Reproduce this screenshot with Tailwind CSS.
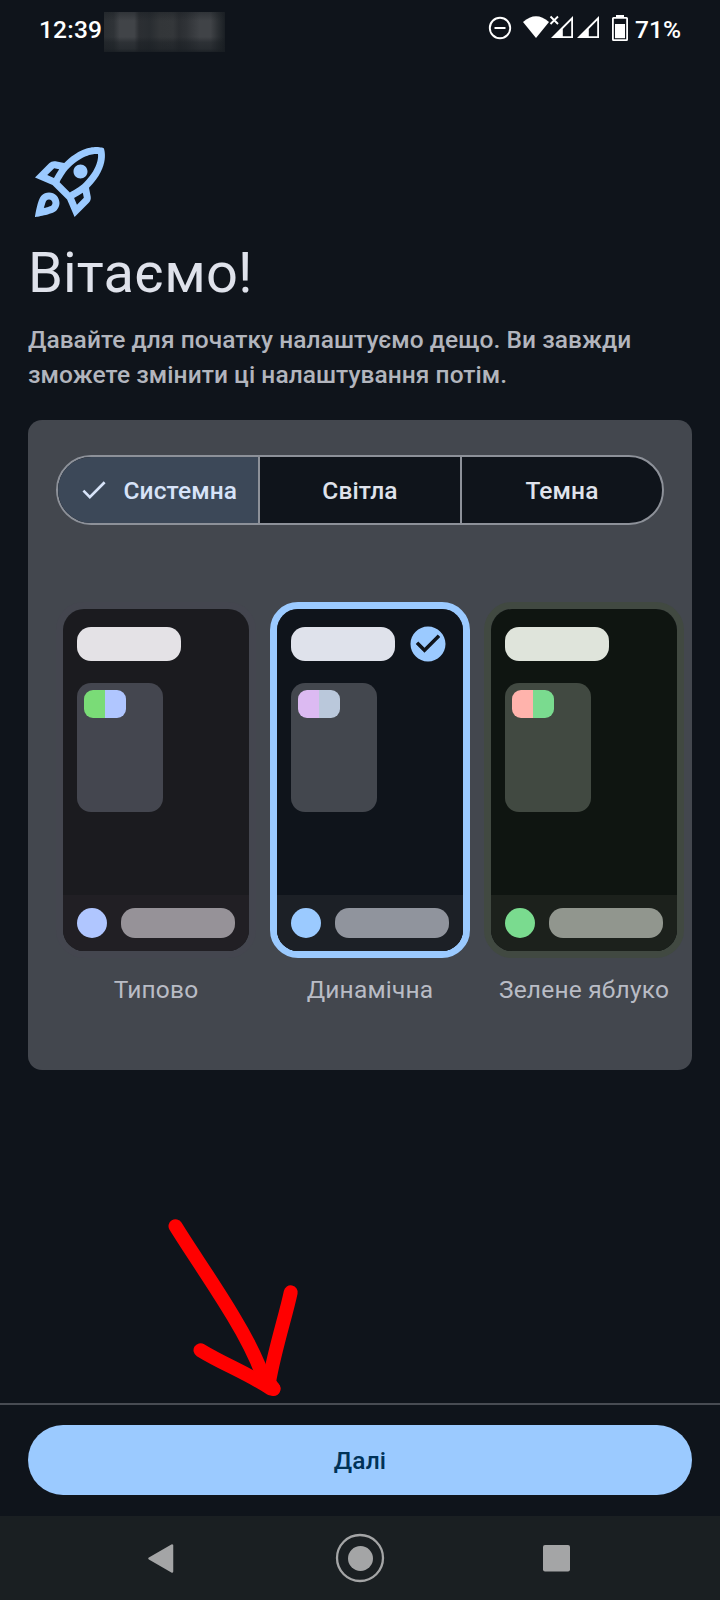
<!DOCTYPE html>
<html lang="uk">
<head>
<meta charset="utf-8">
<title>Вітаємо!</title>
<script src="https://cdn.jsdelivr.net/npm/@tailwindcss/browser@4"></script>
</head>
<body class="bg-[#0f141b]">
<div class="relative flex h-[1600px] w-[720px] flex-col overflow-hidden bg-[#0f141b] font-['Roboto',sans-serif] text-[24.5px] leading-[35px]">

  <!-- Status bar -->
  <header class="flex h-14 shrink-0 items-center pl-[39px] pr-[39px] font-medium text-white">
    <span class="w-[65px] pt-0.5 tracking-[0.2px]">12:39</span>
    <div class="mt-2 h-10 w-[121px] bg-[linear-gradient(90deg,#2b2f33_0%,#2f3337_8%,#414448_13%,#414448_25%,#2c2f33_29%,#292d31_38%,#333639_46%,#34373a_57%,#2b2e32_62%,#303337_68%,#404347_79%,#404347_88%,#2c3034_94%,#1a1f24_100%)]">
      <div class="h-full w-full bg-[linear-gradient(180deg,#171c2166_0%,#171c2100_22%,#171c2100_62%,#171c2177_76%,#171c2199_92%,#171c21dd_100%)]"></div>
    </div>
    <svg class="ml-auto" width="142" height="32" viewBox="488 12 142 32">
      <circle cx="500" cy="28" r="10.2" fill="none" stroke="#fff" stroke-width="1.9"/>
      <path d="M494.5 28h11" stroke="#fff" stroke-width="2"/>
      <path d="M523 22Q536 10.500 549 22L536 38Z" fill="#fff"/>
      <path d="M550.500 16.500l7.500 7.500M558 16.500l-7.500 7.500" stroke="#fff" stroke-width="1.900"/>
      <path d="M551 38L573 16V38Z M562.800 29V36.200H571.200V20.500Z" fill="#fff" fill-rule="evenodd"/>
      <path d="M577 38L599 16V38Z M588.800 29V36.200H597.200V20.500Z" fill="#fff" fill-rule="evenodd"/>
      <path d="M616 15h8v2h2.500q1.500 0 1.500 1.500v21q0 1.500-1.500 1.500h-13q-1.500 0-1.500-1.500v-21q0-1.500 1.500-1.500H616Z M613.800 18.700V39.200H626.200V18.700Z" fill="#fff" fill-rule="evenodd"/>
      <path d="M615 24h10v14.200h-10z" fill="#fff"/>
    </svg>
    <span class="ml-[5px] pt-0.5">71%</span>
  </header>

  <!-- Introduction -->
  <main class="flex grow flex-col px-7 pt-[84px]">
    <svg class="size-[84px]" viewBox="0 0 24 24" fill="#9bcaff">
      <path d="M6,15c-0.83,0-1.58,0.34-2.12,0.88C2.7,17.06,2,22,2,22s4.94-0.7,6.12-1.88C8.66,19.58,9,18.83,9,18C9,16.34,7.66,15,6,15z M6.71,18.71c-0.28,0.28-2.17,0.76-2.17,0.76s0.47-1.88,0.76-2.17C5.47,17.11,5.72,17,6,17c0.55,0,1,0.45,1,1C7,18.28,6.89,18.53,6.71,18.71z M17.42,13.65L17.42,13.65c6.36-6.36,4.24-11.31,4.24-11.31s-4.95-2.12-11.31,4.24l-2.49-0.5C7.21,5.95,6.53,6.16,6.05,6.63L2,10.69l5,2.14L11.17,17l2.14,5l4.05-4.05c0.47-0.47,0.68-1.15,0.55-1.81L17.42,13.65z M7.41,10.83L5.5,10.01l1.97-1.97l1.44,0.29C8.34,9.16,7.83,10.03,7.41,10.83z M13.99,18.5l-0.82-1.91c0.8-0.42,1.67-0.93,2.49-1.5l0.29,1.44L13.99,18.5z M16,12.24c-1.32,1.32-3.38,2.4-4.04,2.73l-2.93-2.93c0.32-0.65,1.4-2.71,2.73-4.04c4.68-4.68,8.23-3.99,8.23-3.99S20.68,7.56,16,12.24z M15,11c1.1,0,2-0.9,2-2s-0.9-2-2-2s-2,0.9-2,2S13.9,11,15,11z"/>
    </svg>
    <h1 class="mt-[14px] text-[56px] leading-[70px] tracking-[0.15px] text-[#dfe2eb]">Вітаємо!</h1>
    <p class="mt-[14px] whitespace-nowrap font-medium tracking-[0.055px] text-[#b2b5bd]">Давайте для початку налаштуємо дещо. Ви завжди<br>зможете змінити ці налаштування потім.</p>

    <!-- Theme card -->
    <section class="mt-7 flex h-[650px] flex-col overflow-hidden rounded-[14px] bg-[#43474e] px-7 pt-[35px]">
      <div class="flex h-[70px] w-[608px] overflow-hidden rounded-full border-2 border-[#8d9199] bg-[#0f141b] font-medium tracking-[0.1px] text-[#dfe2eb]">
        <div class="flex w-[202px] items-center border-r-2 border-[#8d9199] bg-[#3c4858] pl-5 text-[#d7e3f8]">
          <svg class="size-[31.500px]" viewBox="0 0 24 24" fill="#d7e3f8"><path d="M9 16.170L4.830 12l-1.420 1.410L9 19 21 7l-1.410-1.410z"/></svg>
          <span class="ml-[14px]">Системна</span>
        </div>
        <div class="flex w-[202px] items-center justify-center border-r-2 border-[#8d9199]">Світла</div>
        <div class="flex grow items-center justify-center">Темна</div>
      </div>

      <div class="mt-[77px] flex gap-[14px] tracking-[0.2px] text-[#b9bcc5]">
        <!-- Default -->
        <div class="w-[200px]">
          <div class="h-[356px] rounded-[28px] border-[7px] border-[#44464f]">
            <div class="flex h-full flex-col overflow-hidden rounded-[21px] bg-[#1b1b1f]">
              <div class="ml-[14px] mt-[18px] h-[34px] w-[104px] rounded-[14px] bg-[#e4e2e6]"></div>
              <div class="ml-[14px] mt-[22px] h-[129px] w-[86px] rounded-[14px] bg-[#44464f] p-[7px]">
                <div class="flex h-7 w-[42px] overflow-hidden rounded-[9px]"><div class="w-1/2 bg-[#7adc77]"></div><div class="w-1/2 bg-[#b0c6ff]"></div></div>
              </div>
              <div class="mt-auto flex h-14 items-center gap-[14px] bg-[#211f24] px-[14px]"><div class="size-[30px] rounded-full bg-[#b0c6ff]"></div><div class="h-[30px] w-[114px] rounded-[14px] bg-[#969298]"></div></div>
            </div>
          </div>
          <div class="mt-[14px] text-center">Типово</div>
        </div>
        <!-- Dynamic -->
        <div class="w-[200px]">
          <div class="h-[356px] rounded-[28px] border-[7px] border-[#9bcaff]">
            <div class="flex h-full flex-col overflow-hidden rounded-[21px] bg-[#0f141b]">
              <div class="mt-[14px] flex h-[42px] items-center justify-between pl-[14px] pr-[14px]">
                <div class="h-[34px] w-[104px] rounded-[14px] bg-[#dfe2eb]"></div>
                <svg class="size-[42px]" viewBox="0 0 24 24" fill="#9bcaff"><path d="M12 2C6.480 2 2 6.480 2 12s4.480 10 10 10 10-4.480 10-10S17.520 2 12 2zm-2 15l-5-5 1.410-1.410L10 14.170l7.590-7.590L19 8l-9 9z"/></svg>
              </div>
              <div class="ml-[14px] mt-[18px] h-[129px] w-[86px] rounded-[14px] bg-[#43474e] p-[7px]">
                <div class="flex h-7 w-[42px] overflow-hidden rounded-[9px]"><div class="w-1/2 bg-[#dcbaf2]"></div><div class="w-1/2 bg-[#bac8db]"></div></div>
              </div>
              <div class="mt-auto flex h-14 items-center gap-[14px] bg-[#1c2026] px-[14px]"><div class="size-[30px] rounded-full bg-[#9bcaff]"></div><div class="h-[30px] w-[114px] rounded-[14px] bg-[#90949d]"></div></div>
            </div>
          </div>
          <div class="mt-[14px] text-center">Динамічна</div>
        </div>
        <!-- Green apple -->
        <div class="w-[200px] shrink-0">
          <div class="h-[356px] rounded-[28px] border-[7px] border-[#414941]">
            <div class="flex h-full flex-col overflow-hidden rounded-[21px] bg-[#0f1511]">
              <div class="ml-[14px] mt-[18px] h-[34px] w-[104px] rounded-[14px] bg-[#dfe4db]"></div>
              <div class="ml-[14px] mt-[22px] h-[129px] w-[86px] rounded-[14px] bg-[#414941] p-[7px]">
                <div class="flex h-7 w-[42px] overflow-hidden rounded-[9px]"><div class="w-1/2 bg-[#ffb3ac]"></div><div class="w-1/2 bg-[#7adb8f]"></div></div>
              </div>
              <div class="mt-auto flex h-14 items-center gap-[14px] bg-[#1c211c] px-[14px]"><div class="size-[30px] rounded-full bg-[#7adb8f]"></div><div class="h-[30px] w-[114px] rounded-[14px] bg-[#91968e]"></div></div>
            </div>
          </div>
          <div class="mt-[14px] whitespace-nowrap text-center">Зелене яблуко</div>
        </div>
      </div>
    </section>
  </main>

  <!-- Continue button -->
  <div class="h-[113px] shrink-0 border-t-2 border-[#484c53] px-7 pt-5">
    <button class="block h-[70px] w-full rounded-full bg-[#9bcaff] text-center font-medium tracking-[0.175px] text-[#003258]">Далі</button>
  </div>

  <!-- System navigation -->
  <nav class="flex h-[84px] shrink-0 bg-[#1a1f22]">
    <svg width="720" height="84" viewBox="0 1516 720 84">
      <path d="M149.500 1558.500L172 1545.500V1571.500Z" fill="#a4a5a6" stroke="#a4a5a6" stroke-width="2.500" stroke-linejoin="round"/>
      <circle cx="360" cy="1558" r="23" fill="none" stroke="#a4a5a6" stroke-width="2.300"/>
      <circle cx="360.500" cy="1558.500" r="12.500" fill="#a4a5a6"/>
      <rect x="543" y="1545" width="27" height="26.500" rx="2" fill="#a4a5a6"/>
    </svg>
  </nav>

  <!-- Hand-drawn pointer to the button -->
  <svg class="pointer-events-none absolute left-[150px] top-[1190px]" width="200" height="220" viewBox="0 0 200 220" fill="none" stroke="#f00" stroke-width="14" stroke-linecap="round" stroke-linejoin="round">
    <path d="M25.500 36.200C42 63 62 91 83 126C100 154 110 176 116 195"/>
    <path d="M140.700 102.300C136 125 125 158 119 192L123.500 199"/>
    <path d="M50.500 160.200C73 174 97 183 121 198.500H123.500"/>
  </svg>
</div>
</body>
</html>
